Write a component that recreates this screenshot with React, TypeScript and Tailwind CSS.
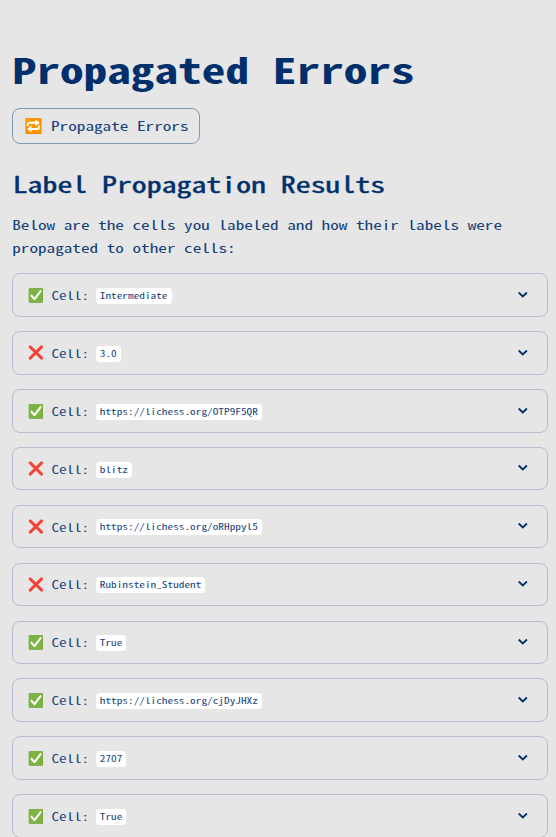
type Cell = { ok: boolean; value: string };

const cells: Cell[] = [
  { ok: true, value: "Intermediate" },
  { ok: false, value: "3.0" },
  { ok: true, value: "https://lichess.org/OTP9F5QR" },
  { ok: false, value: "blitz" },
  { ok: false, value: "https://lichess.org/oRHppyl5" },
  { ok: false, value: "Rubinstein_Student" },
  { ok: true, value: "True" },
  { ok: true, value: "https://lichess.org/cjDyJHXz" },
  { ok: true, value: "2707" },
  { ok: true, value: "True" },
];

function CheckMark() {
  return (
    <svg className="mt-[1px] block h-[15px] w-[15px] shrink-0" viewBox="0 0 15 15">
      <rect x="0.8" y="0.3" width="14.2" height="14.4" rx="0.8" fill="#689f38" />
      <rect x="0.8" y="0.3" width="13.8" height="13.7" rx="0.8" fill="#7cb342" />
      <path d="M3.5 7.7 6.5 11.1 12.6 3.2" fill="none" stroke="#fff" strokeWidth="2.1" strokeLinecap="round" strokeLinejoin="round" />
    </svg>
  );
}

function CrossMark() {
  return (
    <svg className="block h-[15px] w-[15px] shrink-0" viewBox="0 0 15 15">
      <path d="M2.2 1.9 13.6 13.1M13.6 1.9 2.2 13.1" stroke="#f44336" strokeWidth="2.9" strokeLinecap="round" />
    </svg>
  );
}

function Repeat() {
  return (
    <svg className="block h-4 w-[17px] shrink-0" viewBox="0 0 17 16">
      <rect x="0.5" width="16" height="16" rx="0.9" fill="#f57c00" />
      <rect x="0.5" width="15.6" height="15.3" rx="0.9" fill="#ff9800" />
      <path d="M2.7 8V6.8Q2.7 4.8 4.7 4.8H11M14 7.6v1.3q0 2-2 2H5.8" fill="none" stroke="#fff" strokeWidth="2" />
      <path d="M10.3 1.4 14.7 4.8 10.3 8.2ZM6.5 7.5 2.1 10.9 6.5 14.3Z" fill="#fff" />
    </svg>
  );
}

function CellRow({ ok, value }: Cell) {
  return (
    <div className="flex h-[43.5px] shrink-0 items-center rounded-lg border border-[#b3bfcf] pr-[19px] pl-[15px]">
      {ok ? <CheckMark /> : <CrossMark />}
      <span className="ml-[8.4px] block scale-y-75 text-[15.1px] leading-5 text-[#1c477d]">Cell:</span>
      <code className="mt-[1.8px] ml-[6.6px] rounded-[3.5px] bg-white px-1 font-[inherit] text-[11.3px] leading-4 text-[#1c477d]">
        <span className="block origin-[50%_40%] scale-y-[0.77]">{value}</span>
      </code>
      <svg className="mb-[1.4px] ml-auto h-[11px] w-[11px]" viewBox="0 0 11 11">
        <path d="M1.7 3.5 5.8 7.4 9.9 3.5" fill="none" stroke="#002f6c" strokeWidth="1.8" />
      </svg>
    </div>
  );
}

export default function App() {
  return (
    <main className="flex h-[837px] flex-col overflow-hidden bg-[#e6e6e6] pt-[45px] pr-2 pl-3 font-['Noto_Sans_Mono_CJK_SC','Noto_Sans_Mono_CJK_JP','Liberation_Mono',monospace] text-[#002f6c]">
      <h1 className="h-[48px] scale-y-75 pl-[0.6px] text-[47.3px] leading-[48px] font-bold whitespace-nowrap">Propagated Errors</h1>
      <button className="mt-[15px] flex h-9 w-[188px] shrink-0 items-center rounded-lg border border-[#8497b5] pl-[11.5px] text-[17.2px] leading-6 whitespace-nowrap">
        <Repeat />
        <span className="ml-[9.5px] block scale-y-75 text-[#143f77]">Propagate Errors</span>
      </button>
      <h2 className="mt-[23px] h-8 scale-y-75 pl-[0.7px] text-[29.8px] leading-8 whitespace-nowrap [-webkit-text-stroke:0.6px_#002f6c]">
        Label Propagation Results
      </h2>
      <p className="mt-[14px] h-[46px]">
        <span className="block origin-top scale-y-75 pl-[0.2px] text-[17.2px] leading-[30.67px] text-[#143f77]">
          Below are the cells you labeled and how their labels were propagated to other cells:
        </span>
      </p>
      <section className="mt-[14.3px] flex flex-col gap-[14.38px]">
        {cells.map((cell, i) => (
          <CellRow key={i} ok={cell.ok} value={cell.value} />
        ))}
      </section>
    </main>
  );
}
